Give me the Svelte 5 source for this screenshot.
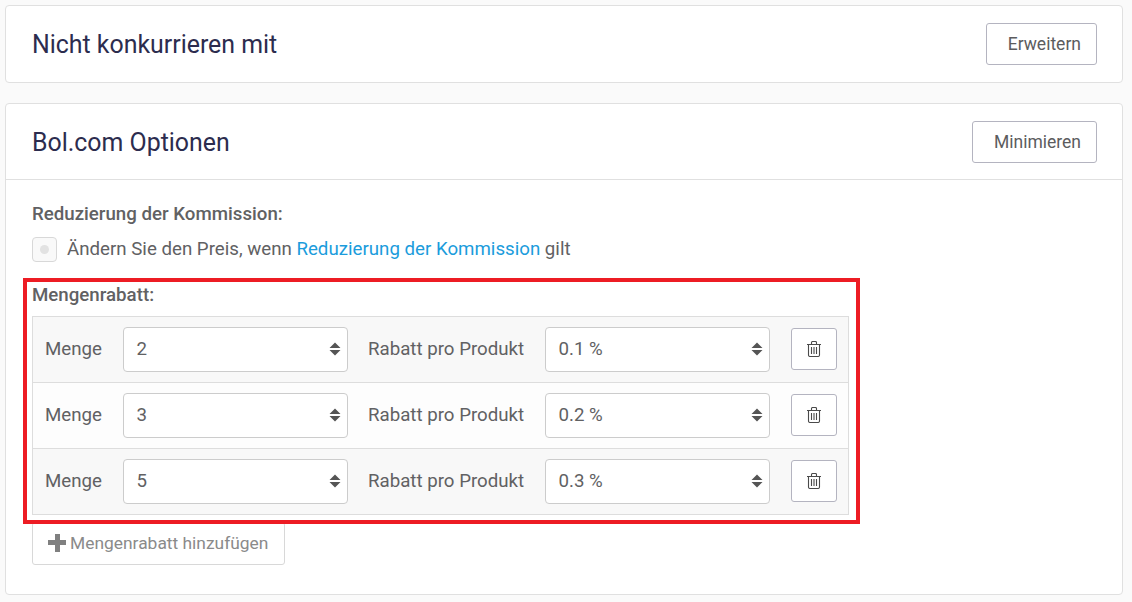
<script>
  const tiers = [
    { qty: "2", discount: "0.1 %" },
    { qty: "3", discount: "0.2 %" },
    { qty: "5", discount: "0.3 %" },
  ];
</script>

<main>
  <section class="card">
    <header>
      <h2>Nicht konkurrieren mit</h2>
      <button class="btn">Erweitern</button>
    </header>
  </section>

  <section class="card">
    <header>
      <h2>Bol.com Optionen</h2>
      <button class="btn">Minimieren</button>
    </header>
    <div class="body">
      <div class="label">Reduzierung der Kommission:</div>
      <div class="check-row">
        <span class="check"><span class="dot"></span></span>
        <span>Ändern Sie den Preis, wenn <a href="#top">Reduzierung der Kommission</a> gilt</span>
      </div>

      <div class="tiers">
        <div class="label tiers-label">Mengenrabatt:</div>
        <div class="table">
          {#each tiers as tier}
            <div class="row">
              <span class="row-label qty-label">Menge</span>
              <div class="select">
                {tier.qty}
                <svg class="arrows" viewBox="0 0 12 16" width="12" height="16">
                  <path d="M6 1.5 11.5 7H.5zM6 14.500 .5 9h11z" fill="#555" />
                </svg>
              </div>
              <span class="row-label disc-label">Rabatt pro Produkt</span>
              <div class="select">
                {tier.discount}
                <svg class="arrows" viewBox="0 0 12 16" width="12" height="16">
                  <path d="M6 1.5 11.5 7H.5zM6 14.500 .5 9h11z" fill="#555" />
                </svg>
              </div>
              <button class="btn trash" aria-label="Entfernen">
                <svg viewBox="0 0 14 16" width="14" height="16" fill="none" stroke="#4a4a4a" stroke-width="1.1">
                  <path d="M0 3.500h14M1.500 3.500V14a1.500 1.500 0 0 0 1.500 1.500h8a1.500 1.500 0 0 0 1.500-1.500V3.500M4.500 3.500V1.500a1 1 0 0 1 1-1h3a1 1 0 0 1 1 1v2M4.500 6v7M7 6v7M9.500 6v7" />
                </svg>
              </button>
            </div>
          {/each}
        </div>
        <div class="highlight"></div>
      </div>

      <button class="btn add"><span class="plus"></span>Mengenrabatt hinzufügen</button>
    </div>
  </section>
</main>

<style>
  :global(body) {
    background: #fafafa;
    font-family: Roboto, "Liberation Sans", sans-serif;
    color: #616163;
  }

  main {
    padding: 5px 9px 7px 5px;
    display: flex;
    flex-direction: column;
    gap: 20px;
  }

  .card {
    background: #fff;
    border: 1px solid #e0e0e0;
    border-radius: 4px;
  }

  header {
    display: flex;
    align-items: center;
    justify-content: space-between;
    height: 76px;
    padding: 0 25px 0 26px;
  }

  h2 {
    margin: 0;
    font-size: 24.9px;
    font-weight: 400;
    color: #2c2c4e;
  }

  .btn {
    font-family: inherit;
    font-size: 17.5px;
    color: #5c5c5e;
    background: #fff;
    border: 1px solid #b4b4c0;
    border-radius: 3px;
    height: 42px;
    padding: 0 15px 0 21px;
  }

  .body {
    margin-top: -1px;
    border-top: 1px solid #e0e0e0;
    padding: 23px 26px 29px;
    font-size: 18.7px;
  }

  .label {
    font-size: 18.7px;
    font-weight: 500;
    line-height: 22px;
  }

  .check-row {
    display: flex;
    align-items: center;
    gap: 10px;
    margin-top: 11px;
    height: 26px;
  }

  .check {
    width: 25px;
    height: 25px;
    box-sizing: border-box;
    border: 1px solid #d8d8d8;
    border-radius: 4px;
    background: #f9f9f9;
    display: flex;
    align-items: center;
    justify-content: center;
  }

  .dot {
    width: 9px;
    height: 9px;
    border-radius: 50%;
    background: #e2e2e2;
  }

  a {
    color: #1b9cdc;
    text-decoration: none;
  }

  .tiers {
    position: relative;
    margin-top: 21px;
    width: 817px;
  }

  .tiers-label {
    line-height: 24px;
  }

  .table {
    margin-top: 9px;
    border: 1px solid #ddd;
    background: #f8f8f8;
  }

  .row {
    display: flex;
    align-items: center;
    height: 65px;
    padding: 0 11px 0 12px;
  }

  .row:nth-child(even) {
    background: #fdfdfd;
  }

  .row + .row {
    border-top: 1px solid #ddd;
  }

  .row-label {
    padding-bottom: 2px;
  }

  .qty-label {
    width: 78px;
  }

  .disc-label {
    box-sizing: border-box;
    width: 197px;
    padding-left: 20px;
  }

  .select {
    position: relative;
    box-sizing: border-box;
    width: 225px;
    height: 45px;
    line-height: 42px;
    padding-left: 12.5px;
    background: #fff;
    border: 1px solid #ccc;
    border-radius: 4px;
  }

  .arrows {
    position: absolute;
    right: 6px;
    top: 13px;
  }

  .trash {
    width: 46px;
    height: 42px;
    margin-left: auto;
    margin-bottom: 2px;
    padding: 0;
    display: flex;
    align-items: center;
    justify-content: center;
  }

  .highlight {
    position: absolute;
    left: -9px;
    top: -5px;
    right: -11px;
    bottom: -9px;
    border: 4px solid #ed1c24;
    pointer-events: none;
  }

  .add {
    display: flex;
    align-items: center;
    gap: 4px;
    margin-top: 7px;
    height: 43px;
    padding: 0 16px 2px 15px;
    font-size: 17.4px;
    border-color: #d8d8d8;
    color: #8a8a8a;
  }

  .plus {
    width: 18px;
    height: 18px;
    background:
      linear-gradient(#808080, #808080) center / 100% 5px no-repeat,
      linear-gradient(#808080, #808080) center / 5px 100% no-repeat;
  }
</style>
